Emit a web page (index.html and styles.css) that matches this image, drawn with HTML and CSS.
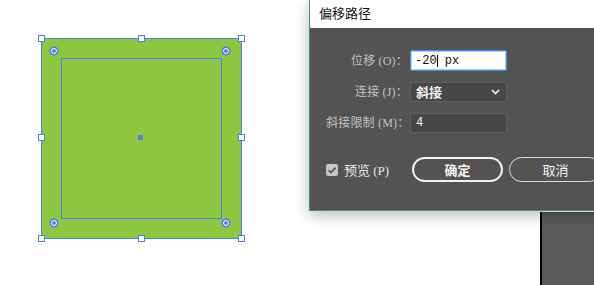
FILE: index.html
```html
<!DOCTYPE html>
<html lang="zh">
<head>
<meta charset="utf-8">
<title>偏移路径</title>
<link rel="stylesheet" href="styles.css">
</head>
<body>
<div class="stage">
  <div class="artboard">
    <div class="inner"></div>
    <span class="handle h-tl"></span>
    <span class="handle h-tc"></span>
    <span class="handle h-tr"></span>
    <span class="handle h-ml"></span>
    <span class="handle h-mr"></span>
    <span class="handle h-bl"></span>
    <span class="handle h-bc"></span>
    <span class="handle h-br"></span>
    <span class="corner c-tl"></span>
    <span class="corner c-tr"></span>
    <span class="corner c-bl"></span>
    <span class="corner c-br"></span>
    <span class="center-dot"></span>
  </div>

  <div class="side-panel"></div>

  <div class="dialog">
    <div class="titlebar">偏移路径</div>
    <div class="dialog-body">
      <div class="form">
        <label class="label">位移 (O)：</label>
        <div class="field field-active"><span class="val">-20</span><span class="caret"></span><span class="val"> px</span></div>
        <label class="label">连接 (J)：</label>
        <div class="field field-select"><span class="sel-text">斜接</span>
          <svg class="chev" width="9" height="6" viewBox="0 0 9 6"><path d="M1 1 L4.5 4.5 L8 1" fill="none" stroke="#f2f2f2" stroke-width="1.6"/></svg>
        </div>
        <label class="label">斜接限制 (M)：</label>
        <div class="field field-dark"><span class="val-light">4</span></div>
      </div>
      <div class="actions">
        <div class="preview">
          <span class="checkbox">
            <svg width="12" height="12" viewBox="0 0 12 12"><path d="M2.5 6.3 L5 8.6 L9.6 3.6" fill="none" stroke="#585858" stroke-width="1.8"/></svg>
          </span>
          <span class="preview-text">预览 (P)</span>
        </div>
        <button class="btn btn-primary">确定</button>
        <button class="btn btn-secondary">取消</button>
      </div>
    </div>
  </div>
</div>
</body>
</html>
```
FILE: styles.css
```css
html, body {
  margin: 0;
  padding: 0;
  background: #ffffff;
}
.stage {
  position: relative;
  width: 594px;
  height: 285px;
  overflow: hidden;
  background: #ffffff;
  font-family: "Liberation Serif", "Noto Sans CJK SC", serif;
}

/* artboard */
.artboard {
  position: absolute;
  left: 41px;
  top: 38px;
  width: 199px;
  height: 199px;
  background: #8dc63f;
  border: 1px solid #4b7ef0;
}
.inner {
  position: absolute;
  left: 19px;
  top: 19px;
  width: 159px;
  height: 159px;
  border: 1px solid #4b7ef0;
}
.handle {
  position: absolute;
  width: 5px;
  height: 5px;
  background: #ffffff;
  border: 1px solid #4b7ef0;
}
.h-tl { left: -4px; top: -4px; }
.h-tc { left: 96px; top: -4px; }
.h-tr { left: 196px; top: -4px; }
.h-ml { left: -4px; top: 95px; }
.h-mr { left: 196px; top: 95px; }
.h-bl { left: -4px; top: 196px; }
.h-bc { left: 96px; top: 196px; }
.h-br { left: 196px; top: 196px; }

.corner {
  position: absolute;
  width: 4px;
  height: 4px;
  border-radius: 50%;
  background: #4b7ef0;
  border: 1.5px solid #ffffff;
  box-shadow: 0 0 0 1.5px #4b7ef0;
}
.c-tl { left: 9px; top: 9px; }
.c-tr { left: 181px; top: 9px; }
.c-bl { left: 9px; top: 181px; }
.c-br { left: 181px; top: 181px; }

.center-dot {
  position: absolute;
  left: 96px;
  top: 96px;
  width: 5px;
  height: 5px;
  border-radius: 1px;
  background: #4b7ef0;
}

/* side panel */
.side-panel {
  position: absolute;
  left: 540px;
  top: 212px;
  width: 54px;
  height: 73px;
  background: #5b5b5b;
  border-left: 2px solid #000000;
}

/* dialog */
.dialog {
  position: absolute;
  left: 309px;
  top: 0;
  width: 330px;
  border-left: 1px solid #3f9a5e;
  border-bottom: 1px solid #3f9a5e;
  box-shadow: 0 4px 14px rgba(0, 0, 0, 0.28);
  z-index: 2;
}
.titlebar {
  height: 28px;
  box-sizing: border-box;
  padding: 4px 0 0 9px;
  line-height: 18px;
  background: #ffffff;
  color: #111111;
  font-family: "Noto Sans CJK SC", sans-serif;
  font-size: 13px;
}
.dialog-body {
  height: 182px;
  box-sizing: border-box;
  background: #535353;
  padding: 22px 0 0 16px;
}
.form {
  display: grid;
  grid-template-columns: 82px 97px;
  column-gap: 2px;
  row-gap: 11px;
  align-items: center;
}
.label {
  text-align: right;
  color: #c2c2c2;
  font-size: 12px;
  line-height: 20px;
  white-space: nowrap;
  letter-spacing: 0.2px;
}
.field {
  height: 20px;
  box-sizing: border-box;
  display: flex;
  align-items: center;
  padding-left: 5px;
  border-radius: 2px;
}
.field-active {
  background: #ffffff;
  border: 1px solid #3f8df2;
  box-shadow: inset 0 0 0 1px rgba(63, 141, 242, 0.45);
  padding-left: 4px;
  height: 21px;
}
.val {
  font-family: "Liberation Mono", monospace;
  font-size: 12px;
  color: #111111;
  white-space: pre;
}
.caret {
  display: inline-block;
  width: 1px;
  height: 12px;
  background: #000000;
}
.field-select {
  background: #474747;
  border: 1px solid #5f5f5f;
  justify-content: space-between;
  padding-right: 6px;
}
.sel-text {
  font-family: "Noto Sans CJK SC", sans-serif;
  font-size: 13px;
  font-weight: 700;
  color: #f0f0f0;
  line-height: 18px;
}
.chev {
  display: block;
}
.field-dark {
  background: #474747;
  border: 1px solid #5f5f5f;
}
.val-light {
  font-family: "Liberation Mono", monospace;
  font-size: 12px;
  color: #f4f4f4;
}

.actions {
  display: flex;
  align-items: center;
  margin-top: 24px;
}
.preview {
  width: 86px;
  display: flex;
  align-items: center;
  gap: 6px;
}
.checkbox {
  width: 12px;
  height: 12px;
  background: #c6c6c6;
  border-radius: 2px;
  display: flex;
}
.preview-text {
  color: #e6e6e6;
  font-size: 13px;
  white-space: nowrap;
}
.btn {
  height: 25px;
  width: 91px;
  box-sizing: border-box;
  border-radius: 13px;
  background: transparent;
  font-family: "Noto Sans CJK SC", sans-serif;
  font-size: 13px;
  color: #f4f4f4;
  padding: 0;
  margin: 0;
  line-height: 1;
}
.btn-primary {
  border: 2px solid #f2f2f2;
  font-weight: 700;
}
.btn-secondary {
  margin-left: 6px;
  width: 93px;
  border: 1.5px solid #dcdcdc;
}
```
